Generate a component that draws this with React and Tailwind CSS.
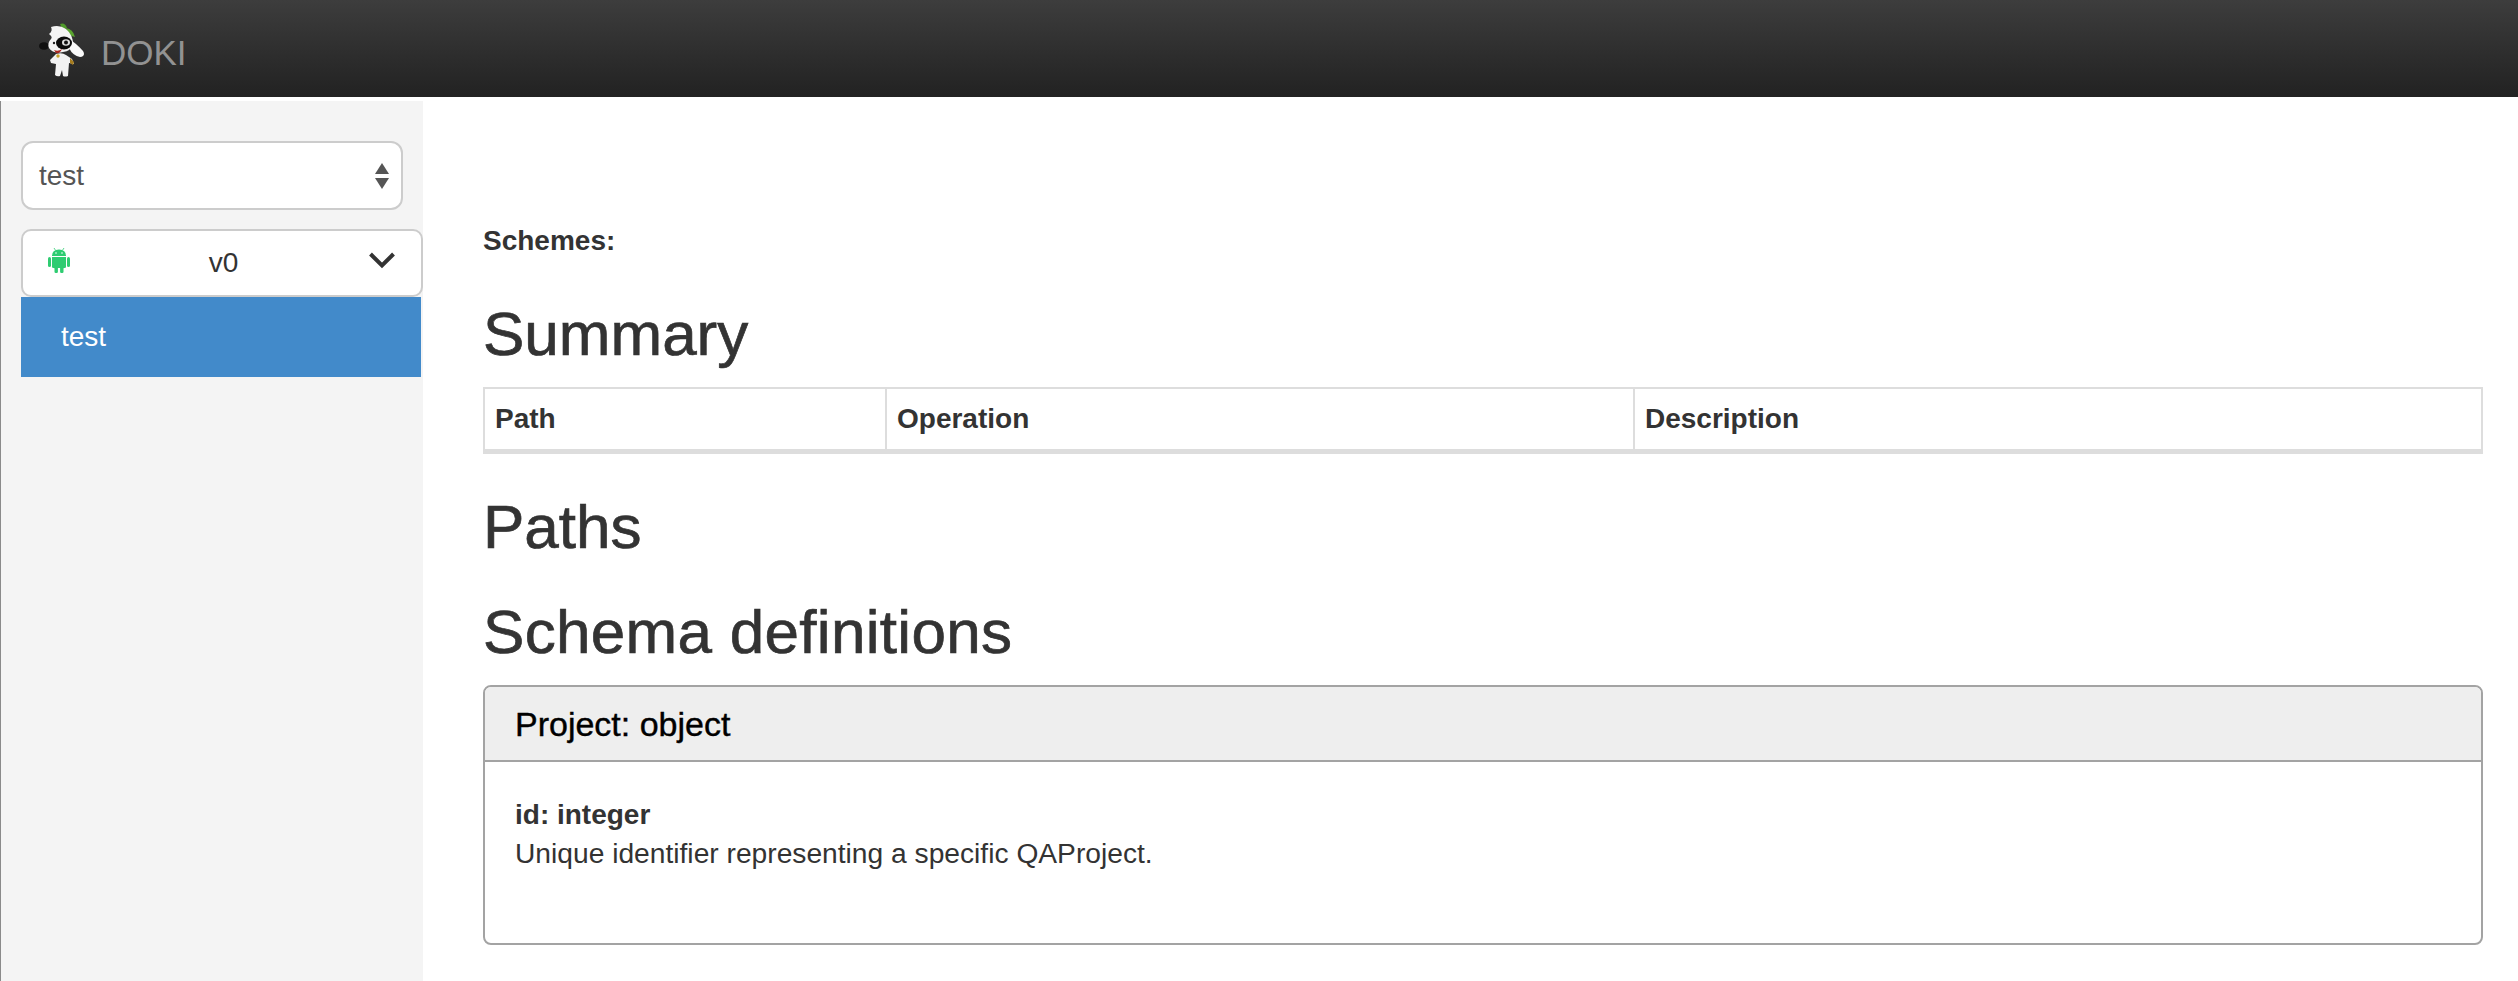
function DokiLogo() {
  return (
    <svg width="46" height="54" viewBox="0 0 46 54" className="mt-[23px] shrink-0">
      <ellipse cx="5" cy="23" rx="5" ry="3.8" fill="#101010" />
      <path d="M21 1 Q26 -1 28 5 L24 7Z" fill="#4f9a2a" />
      <path d="M27 5 Q34 6 36 14 Q29 13 27 5Z" fill="#5aa52f" />
      <path d="M12 4 Q20 1 27 6 Q34 12 34 21 Q32 28 24 29 Q14 31 10 25 Q8 20 12 16 Q14 14 10 11 Q14 8 12 4Z" fill="#f4f4f4" />
      <path d="M30 16 Q37 20 44 28 Q47 33 41 34 Q34 33 30 25Z" fill="#fafafa" />
      <ellipse cx="25" cy="20" rx="8" ry="6.5" fill="#0b0b0b" />
      <ellipse cx="27" cy="19.5" rx="4" ry="3.2" fill="#dcdcdc" />
      <circle cx="27" cy="19.5" r="2" fill="#111111" />
      <circle cx="15" cy="20" r="1.2" fill="#222222" />
      <path d="M15 27 Q19 29 23 26 Q21 31 17 30Z" fill="#a8261f" />
      <path d="M17 31 Q23 29 27 32 L33 36 L35 41 L30 40 L29 53 Q26 54 24 53 L23 47 L21 53 Q18 54 16 52 L17 41 L12 40 L11 37Z" fill="#f2f2f2" />
      <circle cx="19" cy="33" r="1.7" fill="#c9a227" />
      <path d="M31 35 L35 39 L34 42 L31 40Z" fill="#a67c1e" />
    </svg>
  );
}

function SelectArrows() {
  return (
    <svg width="14" height="26" viewBox="0 0 14 26">
      <polygon points="7,0 14,11 0,11" fill="#555555" />
      <polygon points="0,15 14,15 7,26" fill="#555555" />
    </svg>
  );
}

function AndroidIcon() {
  return (
    <svg width="22" height="26" viewBox="0 0 22 26">
      <path d="M6 1 L7.6 3.4 M16 1 L14.4 3.4" stroke="#2ecc71" strokeWidth="0.8" />
      <path d="M4 9 Q4 2.5 11 2.5 Q18 2.5 18 9Z" fill="#2ecc71" />
      <circle cx="8" cy="6" r="0.8" fill="#ffffff" />
      <circle cx="14" cy="6" r="0.8" fill="#ffffff" />
      <path d="M4 10 H18 V20 Q18 21 16.5 21 H5.5 Q4 21 4 20Z" fill="#2ecc71" />
      <rect x="0" y="10" width="3" height="10" rx="1.5" fill="#2ecc71" />
      <rect x="19" y="10" width="3" height="10" rx="1.5" fill="#2ecc71" />
      <rect x="6.5" y="20" width="3.4" height="6" rx="1.2" fill="#2ecc71" />
      <rect x="12.1" y="20" width="3.4" height="6" rx="1.2" fill="#2ecc71" />
    </svg>
  );
}

function Chevron() {
  return (
    <svg width="26" height="18" viewBox="0 0 26 18">
      <polyline points="1.5,3 13,14.5 24.5,3" fill="none" stroke="#333333" strokeWidth="4" />
    </svg>
  );
}

export default function App() {
  return (
    <div className="h-[981px] overflow-hidden bg-white font-['Liberation_Sans',Arial,sans-serif] text-[#333333]">
      <header className="flex h-[97px] items-start bg-gradient-to-b from-[#3d3d3d] to-[#222222] pl-[39px]">
        <DokiLogo />
        <span className="ml-[16px] mt-[33px] text-[35px] leading-[40px] text-[#929292]">DOKI</span>
      </header>
      <div className="mt-[4px] flex h-[880px] border-l border-[#8a8a8a]">
        <aside className="w-[422px] shrink-0 bg-[#f4f4f4] pl-[20px] pt-[40px]">
          <div className="flex h-[69px] w-[382px] items-center justify-between rounded-[12px] border-2 border-[#cccccc] bg-white pl-[16px] pr-[12px] text-[28px] text-[#555555]">
            <span>test</span>
            <SelectArrows />
          </div>
          <div className="mt-[19px] flex h-[68px] w-[402px] items-center justify-between rounded-[10px] border-2 border-[#cccccc] bg-white pl-[25px] pr-[26px] text-[28px]">
            <span className="mb-[6px]">
              <AndroidIcon />
            </span>
            <span className="ml-[8px]">v0</span>
            <span className="mb-[6px]">
              <Chevron />
            </span>
          </div>
          <div className="flex h-[80px] w-[400px] items-center bg-[#428aca] pl-[40px] text-[28px] text-white">test</div>
        </aside>
        <main className="min-w-0 flex-1 pl-[60px] pr-[35px]">
          <p className="mt-[120px] text-[28px] font-bold leading-[40px]">Schemes:</p>
          <h2 className="mt-[40px] text-[62px] leading-[66px] [-webkit-text-stroke:0.7px_#333333]">Summary</h2>
          <table className="mt-[20px] w-full table-fixed border-collapse">
            <thead>
              <tr className="h-[63px] border-2 border-b-[5px] border-[#dddddd] text-left text-[28px] font-bold">
                <th className="w-[402px] pl-[10px]">Path</th>
                <th className="w-[748px] border-l-2 border-[#dddddd] pl-[10px]">Operation</th>
                <th className="border-l-2 border-[#dddddd] pl-[10px]">Description</th>
              </tr>
            </thead>
          </table>
          <h2 className="mt-[40px] text-[62px] leading-[66px] [-webkit-text-stroke:0.7px_#333333]">Paths</h2>
          <h2 className="mt-[39px] text-[62px] leading-[66px] tracking-[0.3px] [-webkit-text-stroke:0.7px_#333333]">Schema definitions</h2>
          <section className="mt-[20px] h-[260px] rounded-[8px] border-2 border-[#a3a3a3]">
            <div className="flex h-[75px] items-center rounded-t-[6px] border-b-2 border-[#a3a3a3] bg-[#eeeeee] pl-[30px] pt-[2px] text-[34px] text-black [-webkit-text-stroke:0.4px_#000000]">
              Project: object
            </div>
            <div className="pl-[30px] pt-[33px] text-[28px] leading-[39px]">
              <p className="font-bold">id: integer</p>
              <p className="text-[28.2px]">Unique identifier representing a specific QAProject.</p>
            </div>
          </section>
        </main>
      </div>
    </div>
  );
}
